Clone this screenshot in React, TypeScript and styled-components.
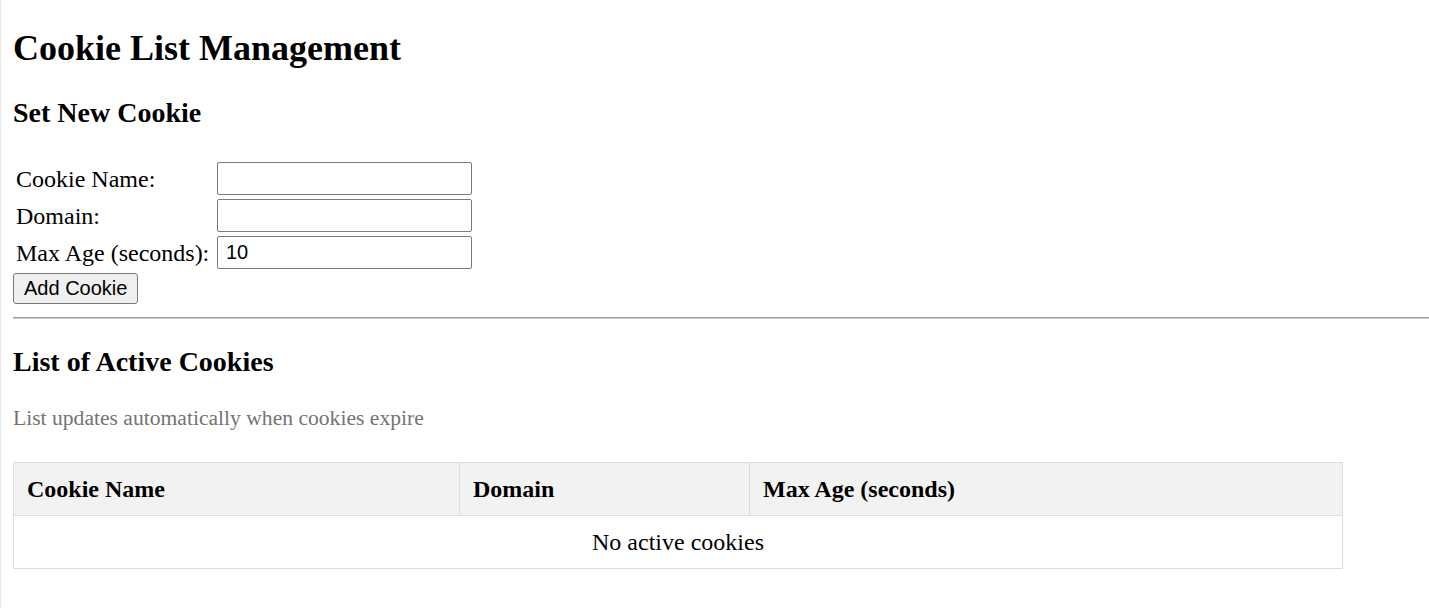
import { useEffect, useState } from 'react';
import styled, { createGlobalStyle } from 'styled-components';

interface CookieItem {
  name: string;
  domain: string;
  maxAge: number;
}

const GlobalStyle = createGlobalStyle`
  html, body {
    margin: 0;
    padding: 0;
    background: #fff;
  }
  body {
    font-family: 'Liberation Serif', 'Times New Roman', serif;
    font-size: 24px;
    color: #000;
    border-left: 1px solid #e8e8e8;
    min-height: 608px;
    box-sizing: border-box;
  }
`;

const Page = styled.div`
  padding: 0 0 40px 12px;
`;

const Title = styled.h1`
  margin: 27px 0 0;
  font-size: 36px;
  line-height: 42px;
  font-weight: 700;
`;

const SectionTitle = styled.h3<{ $top: number }>`
  margin: ${(p) => p.$top}px 0 0;
  font-size: 28px;
  line-height: 32px;
  font-weight: 700;
`;

const FormGrid = styled.div`
  margin-top: 33px;
  padding-left: 3px;
  display: grid;
  grid-template-columns: 201px 255px;
  grid-auto-rows: 33px;
  row-gap: 4px;
  align-items: center;
`;

const Label = styled.label`
  font-size: 24px;
  line-height: 28px;
  white-space: nowrap;
`;

const TextInput = styled.input`
  box-sizing: border-box;
  width: 255px;
  height: 33px;
  margin: 0;
  padding: 0 8px;
  border: 1px solid #7a7a7a;
  border-radius: 2px;
  font-family: 'Liberation Sans', Arial, sans-serif;
  font-size: 20px;
  color: #000;
  background: #fff;
  outline: none;
`;

const AddButton = styled.button`
  display: block;
  box-sizing: border-box;
  margin-top: 4px;
  height: 31px;
  padding: 0 10px;
  border: 1px solid #7a7a7a;
  border-radius: 3px;
  background: #efefef;
  font-family: 'Liberation Sans', Arial, sans-serif;
  font-size: 20px;
  color: #000;
  cursor: pointer;
  &:hover {
    background: #e5e5e5;
  }
`;

const Divider = styled.hr`
  margin: 13px 0 0;
  height: 0;
  border: none;
  border-top: 1px solid #9a9a9a;
  border-bottom: 1px solid #d0d0d0;
`;

const Hint = styled.p`
  margin: 28px 0 0;
  font-size: 21.6px;
  line-height: 25px;
  color: #747474;
`;

const CookieTable = styled.table`
  margin-top: 31px;
  width: 1329px;
  border-collapse: collapse;
  table-layout: fixed;
  border: 1px solid #ddd;
`;

const HeadCell = styled.th<{ $width: number }>`
  box-sizing: border-box;
  width: ${(p) => p.$width}px;
  padding: 12px 13px;
  line-height: 28px;
  text-align: left;
  font-size: 24px;
  font-weight: 700;
  background: #f2f2f2;
  border: 1px solid #ddd;
`;

const Cell = styled.td<{ $center?: boolean }>`
  padding: 12px 13px;
  line-height: 28px;
  font-size: 24px;
  text-align: ${(p) => (p.$center ? 'center' : 'left')};
  border: 1px solid #ddd;
`;

const App = () => {
  const [name, setName] = useState('');
  const [domain, setDomain] = useState('');
  const [maxAge, setMaxAge] = useState('10');
  const [cookies, setCookies] = useState<CookieItem[]>([]);

  // tick every second so expired cookies drop out of the list
  useEffect(() => {
    const timer = setInterval(() => {
      setCookies((list) =>
        list
          .map((c) => ({ ...c, maxAge: c.maxAge - 1 }))
          .filter((c) => c.maxAge > 0),
      );
    }, 1000);
    return () => clearInterval(timer);
  }, []);

  const addCookie = () => {
    const age = parseInt(maxAge, 10);
    if (!name || isNaN(age) || age <= 0) return;
    setCookies((list) => [...list.filter((c) => c.name !== name), { name, domain, maxAge: age }]);
    setName('');
    setDomain('');
  };

  return (
    <Page>
      <GlobalStyle />
      <Title>Cookie List Management</Title>

      <SectionTitle $top={28}>Set New Cookie</SectionTitle>
      <FormGrid>
        <Label htmlFor="cookie-name">Cookie Name:</Label>
        <TextInput id="cookie-name" value={name} onChange={(e) => setName(e.target.value)} />
        <Label htmlFor="cookie-domain">Domain:</Label>
        <TextInput id="cookie-domain" value={domain} onChange={(e) => setDomain(e.target.value)} />
        <Label htmlFor="cookie-age">Max Age (seconds):</Label>
        <TextInput id="cookie-age" value={maxAge} onChange={(e) => setMaxAge(e.target.value)} />
      </FormGrid>
      <AddButton onClick={addCookie}>Add Cookie</AddButton>

      <Divider />

      <SectionTitle $top={27}>List of Active Cookies</SectionTitle>
      <Hint>List updates automatically when cookies expire</Hint>

      <CookieTable>
        <thead>
          <tr>
            <HeadCell $width={446}>Cookie Name</HeadCell>
            <HeadCell $width={290}>Domain</HeadCell>
            <HeadCell $width={593}>Max Age (seconds)</HeadCell>
          </tr>
        </thead>
        <tbody>
          {cookies.length === 0 ? (
            <tr>
              <Cell colSpan={3} $center>
                No active cookies
              </Cell>
            </tr>
          ) : (
            cookies.map((c) => (
              <tr key={c.name}>
                <Cell>{c.name}</Cell>
                <Cell>{c.domain}</Cell>
                <Cell>{c.maxAge}</Cell>
              </tr>
            ))
          )}
        </tbody>
      </CookieTable>
    </Page>
  );
};

export default App;
